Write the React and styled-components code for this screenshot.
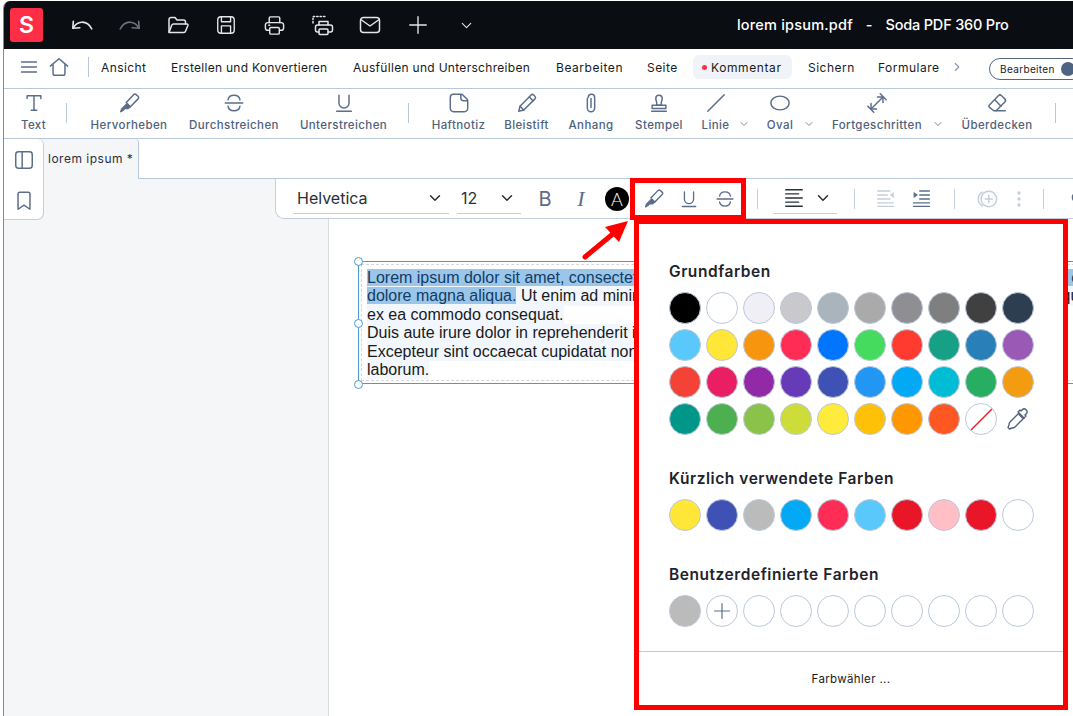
import React from "react";
import styled, { createGlobalStyle } from "styled-components";

const GlobalStyle = createGlobalStyle`
    html, body {
        margin: 0;
        padding: 0;
        background: #fff;
    }

    * {
        box-sizing: border-box;
    }
`;

const Root = styled.div`
    position: relative;
    width: 1073px;
    height: 716px;
    overflow: hidden;
    padding: 1px 0 0 3px;
    background: #fff;
    font-family: Inter, "Noto Sans", sans-serif;
`;

const Frame = styled.div`
    display: flex;
    flex-direction: column;
    height: 715px;
    width: 1100px;
    border-left: 1px solid #8a8a8a;
    border-top-left-radius: 7px;
    overflow: hidden;
`;

const TitleBar = styled.header`
    display: flex;
    align-items: center;
    flex: none;
    height: 48px;
    width: 1070px;
    margin-left: -1px;
    padding-left: 7px;
    background: #0a0d12;
    color: #fff;
`;

const Logo = styled.div`
    display: flex;
    align-items: center;
    justify-content: center;
    flex: none;
    width: 33px;
    height: 34px;
    margin-right: 15px;
    border-radius: 3px;
    background: #ff2d46;
    font-size: 23px;
    font-weight: 600;
`;

const TitleTool = styled.span`
    display: flex;
    justify-content: center;
    flex: none;
    width: 48px;
    color: ${p => (p.$off ? "#6d7177" : "#e4e6ea")};
`;

const DocTitle = styled.div`
    display: flex;
    gap: 13px;
    margin: -1px 0 0 247px;
    font-size: 14.5px;
    font-weight: 500;
    white-space: nowrap;
`;

const TitlePart = styled.span`
    letter-spacing: ${p => p.$track}px;
`;

const MenuBar = styled.nav`
    display: flex;
    align-items: center;
    flex: none;
    height: 40px;
    padding: 0 0 3px 14.5px;
    border-bottom: 1px solid #b9c7da;
    background: #fff;
`;

const MenuIcons = styled.div`
    display: flex;
    align-items: center;
    gap: 9.5px;
    height: 20px;
    padding-right: 18px;
    margin-right: 12px;
    border-right: 1px solid #b9c7da;
    color: #5a6d8a;
`;

const MenuItem = styled.span`
    flex: none;
    width: ${p => p.$w}px;
    margin-right: 25px;
    font-size: 12px;
    font-weight: 400;
    letter-spacing: ${p => p.$track ?? 0.2}px;
    color: #161b23;
    white-space: nowrap;
`;

const ActiveMenuItem = styled(MenuItem)`
    display: flex;
    align-items: center;
    gap: 4px;
    height: 24px;
    margin: 0 16px 0 -8px;
    padding-left: 9px;
    border-radius: 6px;
    background: #f0f3f7;

    &::before {
        content: "";
        flex: none;
        width: 5px;
        height: 5px;
        border-radius: 50%;
        background: #ff2d46;
    }
`;

const MenuMore = styled.span`
    display: flex;
    margin: 0 25px 0 -15px;
    color: #8a97aa;
`;

const ModeToggle = styled.div`
    display: flex;
    align-items: center;
    flex: none;
    gap: 6px;
    width: 94px;
    height: 22px;
    margin-top: 3px;
    padding-left: 10px;
    border: 1px solid #55677f;
    border-radius: 11px;
    font-size: 10px;
    font-weight: 400;
    letter-spacing: 0.35px;
    color: #161b23;

    &::after {
        content: "";
        flex: none;
        width: 14px;
        height: 14px;
        border-radius: 50%;
        background: #4f6484;
    }
`;

const Ribbon = styled.div`
    display: flex;
    align-items: stretch;
    flex: none;
    height: 50px;
    padding: 3px 0 0 17px;
    border-bottom: 1px solid #b9c7da;
    background: #fff;
`;

const RibbonTool = styled.div`
    display: flex;
    flex-direction: column;
    align-items: center;
    flex: none;
    width: ${p => p.$w}px;
    margin-right: ${p => p.$gap ?? 20}px;
    color: #5a6d8a;
`;

const RibbonLabel = styled.span`
    display: flex;
    align-items: center;
    height: 18px;
    margin-top: 2px;
    font-size: 11.5px;
    font-weight: 500;
    letter-spacing: 0.4px;
    color: #4f617c;
    white-space: nowrap;
`;

const RibbonCaret = styled.span`
    display: flex;
    align-items: flex-end;
    align-self: flex-end;
    flex: none;
    width: 12px;
    height: 30px;
    margin: 0 ${p => p.$after}px 0 ${p => p.$before}px;
    padding-bottom: 8px;
    color: #5a6d8a;
`;

const RibbonRule = styled.span`
    flex: none;
    align-self: center;
    width: 1px;
    height: 20px;
    margin: 0 ${p => p.$after}px 4px ${p => p.$before}px;
    background: #b9c7da;
`;

const Workspace = styled.div`
    display: flex;
    flex: 1;
    min-height: 0;
    background: #f5f6f8;
`;

const SideColumn = styled.aside`
    flex: none;
    width: 40px;
`;

const SidePanel = styled.div`
    display: flex;
    flex-direction: column;
    align-items: center;
    gap: 19px;
    height: 81px;
    padding-top: 10px;
    border-right: 1px solid #c3cfdf;
    border-bottom: 1px solid #c3cfdf;
    border-radius: 0 6px 7px 0;
    background: #fff;
    color: #5a6d8a;
`;

const MainColumn = styled.main`
    display: flex;
    flex-direction: column;
    flex: 1;
    min-width: 0;
`;

const TabStrip = styled.div`
    display: flex;
    flex: none;
    height: 40px;
    background: #fff;
`;

const Tab = styled.div`
    flex: none;
    width: 95px;
    padding: 12px 0 0 4px;
    border-right: 1px solid #b9c7da;
    border-top-right-radius: 4px;
    background: #f5f6f8;
    font-size: 12px;
    color: #2a3038;
    letter-spacing: 0.5px;
    white-space: nowrap;
`;

const TabRest = styled.div`
    flex: 1;
    border-bottom: 1px solid #b9c7da;
`;

const FormatBar = styled.div`
    display: flex;
    align-items: center;
    flex: none;
    height: 40px;
    margin-left: 231px;
    padding-left: 17px;
    border-left: 1px solid #c3cfdf;
    border-bottom: 1px solid #c3cfdf;
    border-bottom-left-radius: 9px;
    background: #fff;
    color: #5a6d8a;
`;

const FormatSelect = styled.div`
    display: flex;
    align-items: center;
    justify-content: space-between;
    align-self: flex-start;
    flex: none;
    width: ${p => p.$w}px;
    height: 35px;
    margin-right: ${p => p.$gap}px;
    padding: 3px 5px 0 ${p => p.$pad ?? 4}px;
    border-bottom: 1px solid #c3cfdf;
    font-size: 16px;
    color: #2a3038;
`;

const FormatButton = styled.span`
    display: flex;
    align-items: center;
    justify-content: center;
    flex: none;
    width: ${p => p.$w ?? 36}px;
    color: ${p => (p.$off ? "#c6ceda" : "#5a6d8a")};
`;

const FormatRule = styled.span`
    flex: none;
    width: 1px;
    height: 20px;
    margin: 0 ${p => p.$after}px 0 ${p => p.$before}px;
    background: #c3cfdf;
`;

const BoldMark = styled.span`
    font-size: 20px;
    font-weight: 400;
    color: #5a6d8a;
`;

const ItalicMark = styled.span`
    font-family: "Liberation Serif", serif;
    font-size: 22px;
    font-style: italic;
    color: #5a6d8a;
`;

const ColorBadge = styled.span`
    display: flex;
    align-items: center;
    justify-content: center;
    width: 24px;
    height: 24px;
    border-radius: 50%;
    background: #000;
    color: #fff;
    font-family: Lato, Inter, sans-serif;
    font-size: 18px;
    font-weight: 300;
`;

const Canvas = styled.div`
    flex: 1;
    margin-left: 284px;
    padding: 42px 0 0 29px;
    border-left: 1px solid #dcdcdc;
    background: #fff;
`;

const TextFrame = styled.div`
    position: relative;
    width: 900px;
    height: 123px;
    padding: 2px;
    border: 1px solid #4a98d4;
`;

const TextInner = styled.div`
    height: 100%;
    padding: 4px 0 0 5px;
    border: 1px dashed #d6d6d6;
    font-family: "Liberation Sans", Arial, sans-serif;
    font-size: 16px;
    line-height: 18.4px;
    color: #1a1a1a;
`;

const TextLine = styled.span`
    display: block;
    width: fit-content;
    background: #f1f7fd;
    white-space: nowrap;
`;

const Selected = styled.span`
    background: #9cc6e9;
    color: #103c66;
`;

const Handle = styled.span`
    position: absolute;
    left: -5px;
    top: ${p => p.$top}px;
    width: 9px;
    height: 9px;
    border: 1px solid #4a98d4;
    border-radius: 50%;
    background: #fff;
`;

const RedBox = styled.div`
    position: absolute;
    left: 630px;
    top: 178px;
    width: 116px;
    height: 42px;
    border: 5px solid #f00;
`;

const Arrow = styled.svg`
    position: absolute;
    left: 578px;
    top: 218px;
`;

const ColorPopover = styled.section`
    position: absolute;
    left: 634px;
    top: 219px;
    display: flex;
    flex-direction: column;
    width: 434px;
    height: 491px;
    border: 5px solid #f00;
    background: #fff;
`;

const PopoverBody = styled.div`
    flex: 1;
    padding: 37px 0 0 30px;
`;

const Heading = styled.h3`
    margin: ${p => p.$top || 0}px 0 10px;
    font-size: 15.5px;
    line-height: 21px;
    font-weight: 600;
    letter-spacing: 0.55px;
    color: #1d232c;
`;

const SwatchGrid = styled.div`
    display: grid;
    grid-template-columns: repeat(10, 32px);
    grid-auto-rows: 32px;
    gap: 5px;
`;

const Swatch = styled.span`
    display: flex;
    align-items: center;
    justify-content: center;
    border: 1px solid #bcc9dc;
    border-radius: 50%;
    background: ${p => p.$color || "#fff"};
    color: #5a6d8a;
    overflow: hidden;
`;

const PlainSwatch = styled.span`
    display: flex;
    align-items: center;
    justify-content: center;
    color: #4f617c;
`;

const Slash = styled.svg`
    display: block;
    width: 30px;
    height: 30px;
`;

const PopoverFooter = styled.div`
    display: flex;
    align-items: center;
    justify-content: center;
    flex: none;
    height: 54px;
    border-top: 1px solid #bcc7d8;
    font-size: 11.5px;
    font-weight: 400;
    color: #161b23;
    letter-spacing: 0.35px;
`;

const Svg = styled.svg`
    display: block;
    flex: none;
    fill: none;
    stroke: currentColor;
    stroke-width: ${p => p.$stroke || 1.6};
    stroke-linecap: round;
    stroke-linejoin: round;
`;

const iconPaths = {
    undo: <><path d="M4 8.5 3.5 15 10 14.5"/><path d="M3.8 14.8C7 8.5 16 6.5 21 15.5"/></>,
    redo: <><path d="M20 8.5l.5 6.5-6.5-.5"/><path d="M20.2 14.8C17 8.5 8 6.5 3 15.5"/></>,
    folder: <><path d="M3 19V6.5A2 2 0 0 1 5 4.5h4l2 2.5h6.5a2 2 0 0 1 2 2V11"/><path d="M3 19.5h15a1.5 1.5 0 0 0 1.4-1l2.6-6.2a1 1 0 0 0-1-1.3H7.5a2 2 0 0 0-1.8 1.2L3 19.5Z"/></>,
    save: <><rect x="3" y="3" width="18" height="18" rx="3.5"/><path d="M7 3v5.5h10V3"/><path d="M7 21v-8h10v8"/></>,
    printer: <><path d="M6.5 9V4.2A1.2 1.2 0 0 1 7.7 3h8.6a1.2 1.2 0 0 1 1.2 1.2V9"/><path d="M6.5 17H5a2.5 2.5 0 0 1-2.5-2.5v-3A2.5 2.5 0 0 1 5 9h14a2.5 2.5 0 0 1 2.5 2.5v3A2.5 2.5 0 0 1 19 17h-1.5"/><rect x="7" y="14" width="10" height="7" rx="1.2"/><path d="M6 11.8h1"/></>,
    batchPrint: <><path d="M3 10V3.5h13" strokeDasharray="1.4 2"/><path d="M9 12V8.5h9V12"/><path d="M9 19H7.5A2 2 0 0 1 5.5 17v-3a2 2 0 0 1 2-2h13a2 2 0 0 1 2 2v3a2 2 0 0 1-2 2H18"/><rect x="9" y="16" width="9" height="5.5" rx="1"/></>,
    mail: <><rect x="2.5" y="4.5" width="19" height="15" rx="3"/><path d="m3.5 7 8.5 6 8.5-6"/></>,
    plus: <path d="M12 3v18M3 12h18"/>,
    chevron: <path d="m6 9 6 6 6-6"/>,
    caretRight: <path d="m9 6 6 6-6 6"/>,
    menu: <path d="M3 6h18M3 12h18M3 18h18"/>,
    home: <path d="M2.5 11 12 3l9.5 8M5.5 9v10a2 2 0 0 0 2 2h9a2 2 0 0 0 2-2V9"/>,
    text: <><path d="M4.5 7V4h15v3"/><path d="M12 4v16"/><path d="M9 20h6"/></>,
    highlight: <><path d="M9 11.5 17 3a2 2 0 0 1 2.8-.1l2 1.8a2 2 0 0 1 .1 2.8L13.5 16"/><path d="M10 12.5 13.5 16 11 18H7.5L5.5 20 3 21.5 4 18.5 6.5 16Z" fill="currentColor"/></>,
    strike: <><path d="M5.5 8.5C6 5 9 3.5 12 3.5S18 5 18.5 8.5"/><path d="M2.5 12h19"/><path d="M5.5 15.5C6 19 9 20.5 12 20.5S18 19 18.5 15.5"/></>,
    underline: <><path d="M6.5 3.5V12a5.5 5.5 0 0 0 11 0V3.5"/><path d="M4 21h16"/></>,
    note: <path d="M6 2.5h8.5a2 2 0 0 1 1.4.6L20.9 8a2 2 0 0 1 .6 1.4V18a3.5 3.5 0 0 1-3.5 3.5H6A3.5 3.5 0 0 1 2.5 18V6A3.5 3.5 0 0 1 6 2.5ZM14 3v3.5a3 3 0 0 0 3 3h4"/>,
    pencil: <><path d="M3 21l1.4-5.5L16.5 3.3a2 2 0 0 1 2.8 0l1.4 1.4a2 2 0 0 1 0 2.8L8.5 19.6 3 21Z"/><path d="m14.5 5.5 4 4"/><path d="m4.4 15.5 4.1 4.1"/></>,
    clip: <path d="M8 7v10.5a4 4 0 0 0 8 0V6a3.5 3.5 0 0 0-7 0M12 7v10"/>,
    stamp: <><path d="M9.5 12c0-2-1-3-1-5a3.5 3.5 0 0 1 7 0c0 2-1 3-1 5v2.5h-5V12Z"/><path d="M4.5 14.5h15V18h-15Z"/><path d="M4 21h16"/></>,
    line: <path d="M3 21 21 3"/>,
    oval: <ellipse cx="12" cy="12" rx="10" ry="7.5"/>,
    advanced: <><path d="M6 18 18 6"/><path d="M12.5 5.5h6v6"/><path d="M5.5 12.5v6h6"/><path d="m15.5 2 6.5 6.5"/><path d="M2 15.5 8.5 22"/></>,
    eraser: <><path d="M3.5 14.5 13.5 4a2.5 2.5 0 0 1 3.5 0l3.5 3.5a2.5 2.5 0 0 1 0 3.5L11 20.5H8.5l-5-4a1.5 1.5 0 0 1 0-2Z"/><path d="m9.5 8.5 7 7"/><path d="M11 20.5h10"/></>,
    sidebar: <><rect x="3" y="3" width="18" height="18" rx="3"/><path d="M10 3v18"/></>,
    bookmark: <path d="M5.5 4.5a2 2 0 0 1 2-2h9a2 2 0 0 1 2 2V21L12 16.5 5.5 21V4.5Z"/>,
    align: <path d="M3 3h18M3 7.5h14M3 12h18M3 16.5h14M3 21h18"/>,
    outdent: <><path d="M3 3.5h14M3 8h11M3 12.5h14M3 17h18M3 21h18"/><path d="M21.5 4.5v7L17 8Z" fill="currentColor" stroke="none"/></>,
    indent: <><path d="M10 3.5h11M10 8h11M10 12.5h11M3 17h18M3 21h18"/><path d="M3 4.5v7L8 8Z" fill="currentColor" stroke="none"/></>,
    circlePlus: <><circle cx="14" cy="12" r="8.5"/><path d="M7 4.5a8.5 8.5 0 0 0 0 15"/><path d="M14 8v8M10 12h8"/></>,
    dots: <><circle cx="12" cy="4" r="2.2" fill="currentColor" stroke="none"/><circle cx="12" cy="12" r="2.2" fill="currentColor" stroke="none"/><circle cx="12" cy="20" r="2.2" fill="currentColor" stroke="none"/></>,
    dropper: <><path d="m13 7.5 3.5 3.5"/><path d="m15 4 1.5-1.5a2.3 2.3 0 0 1 3.3 0l.7.7a2.3 2.3 0 0 1 0 3.3L19 8l1 1-2 2-6-6 2-2Z"/><path d="M13 6 4 15c-1 1-1 2-1 3l-1 2.5 1.5 1.5L6 21c1 0 2 0 3-1l9-9"/></>,
    link: <><path d="M10 4a6 6 0 0 0 0 12h4"/><path d="M14 8a6 6 0 0 1 0 12h-4"/></>,
};

const Icon = ({ name, size = 22, stroke }) => (
    <Svg viewBox="0 0 24 24" width={size} height={size} $stroke={stroke}>
        {iconPaths[name]}
    </Svg>
);

const titleTools = [
    { name: "undo", w: 26 },
    { name: "redo", off: true, w: 26 },
    { name: "folder", w: 24 },
    { name: "save", w: 22 },
    { name: "printer", w: 23 },
    { name: "batchPrint", w: 24 },
    { name: "mail", w: 24 },
    { name: "plus", w: 22 },
    { name: "chevron", w: 17 },
];

const menuItems = [
    { label: "Ansicht", w: 45, track: 0.4 },
    { label: "Erstellen und Konvertieren", w: 157, track: 0.28 },
    { label: "Ausfüllen und Unterschreiben", w: 178, track: 0.3 },
    { label: "Bearbeiten", w: 66, track: 0.55 },
    { label: "Seite", w: 29, track: 0.45 },
];

const basicColors = [
    "#000000", "#ffffff", "#efeff5", "#c8c8cd", "#aab4bc", "#aaaaaa", "#8e8e93", "#7f7f7f", "#404040", "#2c3e50",
    "#5ac8fa", "#ffe637", "#f7950f", "#ff2d55", "#0076ff", "#44db5e", "#ff3b30", "#16a085", "#2980b9", "#9b59b6",
    "#f44336", "#e91e63", "#9229a6", "#673ab7", "#3f51b5", "#2196f3", "#03a9f4", "#00bcd4", "#27ae60", "#f39c12",
    "#009688", "#4caf50", "#8bc34a", "#cddc39", "#ffeb3b", "#ffc107", "#ff9800", "#ff5722",
];

const recentColors = ["#ffe637", "#3f51b5", "#bbbbbb", "#03a9f4", "#ff2d55", "#5ac8fa", "#e81626", "#ffbfc4", "#e81626", "#ffffff"];

export default function App() {
    return (
        <Root>
            <GlobalStyle/>
            <Frame>
                <TitleBar>
                    <Logo>S</Logo>
                    {titleTools.map(t => (
                        <TitleTool key={t.name} $off={t.off}>
                            <Icon name={t.name} size={t.w} stroke={1.5}/>
                        </TitleTool>
                    ))}
                    <DocTitle>
                        <TitlePart $track={0.2}>lorem ipsum.pdf</TitlePart>
                        <TitlePart $track={0}>-</TitlePart>
                        <TitlePart $track={-0.2}>Soda PDF 360 Pro</TitlePart>
                    </DocTitle>
                </TitleBar>

                <MenuBar>
                    <MenuIcons>
                        <Icon name="menu" size={20}/>
                        <Icon name="home" size={22}/>
                    </MenuIcons>
                    {menuItems.map(m => <MenuItem key={m.label} $w={m.w} $track={m.track}>{m.label}</MenuItem>)}
                    <ActiveMenuItem $w={99} $track={0.6}>Kommentar</ActiveMenuItem>
                    <MenuItem $w={45} $track={0.5}>Sichern</MenuItem>
                    <MenuItem $w={62} $track={0.5}>Formulare</MenuItem>
                    <MenuMore><Icon name="caretRight" size={14} stroke={2}/></MenuMore>
                    <ModeToggle>Bearbeiten</ModeToggle>
                </MenuBar>

                <Ribbon>
                    <RibbonTool $w={25} $gap={0}><Icon name="text"/><RibbonLabel>Text</RibbonLabel></RibbonTool>
                    <RibbonRule $before={20} $after={23}/>
                    <RibbonTool $w={78}><Icon name="highlight"/><RibbonLabel>Hervorheben</RibbonLabel></RibbonTool>
                    <RibbonTool $w={92}><Icon name="strike"/><RibbonLabel>Durchstreichen</RibbonLabel></RibbonTool>
                    <RibbonTool $w={87} $gap={0}><Icon name="underline"/><RibbonLabel>Unterstreichen</RibbonLabel></RibbonTool>
                    <RibbonRule $before={21} $after={23}/>
                    <RibbonTool $w={53}><Icon name="note"/><RibbonLabel>Haftnotiz</RibbonLabel></RibbonTool>
                    <RibbonTool $w={43} $gap={19}><Icon name="pencil"/><RibbonLabel>Bleistift</RibbonLabel></RibbonTool>
                    <RibbonTool $w={48}><Icon name="clip"/><RibbonLabel>Anhang</RibbonLabel></RibbonTool>
                    <RibbonTool $w={48} $gap={19}><Icon name="stamp"/><RibbonLabel>Stempel</RibbonLabel></RibbonTool>
                    <RibbonTool $w={27} $gap={0}><Icon name="line"/><RibbonLabel>Linie</RibbonLabel></RibbonTool>
                    <RibbonCaret $before={9} $after={16}><Icon name="chevron" size={12}/></RibbonCaret>
                    <RibbonTool $w={28} $gap={0}><Icon name="oval"/><RibbonLabel>Oval</RibbonLabel></RibbonTool>
                    <RibbonCaret $before={9} $after={16}><Icon name="chevron" size={12}/></RibbonCaret>
                    <RibbonTool $w={92} $gap={0}><Icon name="advanced"/><RibbonLabel>Fortgeschritten</RibbonLabel></RibbonTool>
                    <RibbonCaret $before={9} $after={17}><Icon name="chevron" size={12}/></RibbonCaret>
                    <RibbonTool $w={72} $gap={0}><Icon name="eraser"/><RibbonLabel>Überdecken</RibbonLabel></RibbonTool>
                    <RibbonRule $before={22} $after={0}/>
                </Ribbon>

                <Workspace>
                    <SideColumn>
                        <SidePanel>
                            <Icon name="sidebar"/>
                            <Icon name="bookmark"/>
                        </SidePanel>
                    </SideColumn>
                    <MainColumn>
                        <TabStrip>
                            <Tab>lorem ipsum *</Tab>
                            <TabRest/>
                        </TabStrip>
                        <FormatBar>
                            <FormatSelect $w={156} $gap={8}>Helvetica<Icon name="chevron" size={18} stroke={2}/></FormatSelect>
                            <FormatSelect $w={64} $gap={6}>12<Icon name="chevron" size={18} stroke={2}/></FormatSelect>
                            <FormatButton><BoldMark>B</BoldMark></FormatButton>
                            <FormatButton><ItalicMark>I</ItalicMark></FormatButton>
                            <FormatButton><ColorBadge>A</ColorBadge></FormatButton>
                            <FormatButton><Icon name="highlight" size={21}/></FormatButton>
                            <FormatButton><Icon name="underline" size={20}/></FormatButton>
                            <FormatButton><Icon name="strike" size={20}/></FormatButton>
                            <FormatRule $before={14} $after={15}/>
                            <FormatSelect $w={64} $gap={0} $pad={10}>
                                <Icon name="align" size={22}/>
                                <Icon name="chevron" size={18} stroke={2}/>
                            </FormatSelect>
                            <FormatRule $before={17} $after={12}/>
                            <FormatButton $off><Icon name="outdent" size={21}/></FormatButton>
                            <FormatButton><Icon name="indent" size={21}/></FormatButton>
                            <FormatRule $before={15} $after={14}/>
                            <FormatButton $off><Icon name="circlePlus" size={22}/></FormatButton>
                            <FormatButton $off $w={28}><Icon name="dots" size={18}/></FormatButton>
                            <FormatRule $before={10} $after={17}/>
                            <FormatButton><Icon name="link" size={20}/></FormatButton>
                        </FormatBar>
                        <Canvas>
                            <TextFrame>
                                <Handle $top={-5}/>
                                <Handle $top={57}/>
                                <Handle $top={118}/>
                                <TextInner>
                                    <TextLine><Selected>Lorem ipsum dolor sit amet, consectetur adipiscing elit, sed do eiusmod tempor incididunt ut labore et</Selected></TextLine>
                                    <TextLine><Selected>dolore magna aliqua.</Selected> Ut enim ad minim veniam, quis nostrud exercitation ullamco laboris nisi ut aliquip</TextLine>
                                    <TextLine>ex ea commodo consequat.</TextLine>
                                    <TextLine>Duis aute irure dolor in reprehenderit in voluptate velit esse cillum dolore eu fugiat nulla pariatur.</TextLine>
                                    <TextLine>Excepteur sint occaecat cupidatat non proident, sunt in culpa qui officia deserunt mollit anim id est</TextLine>
                                    <TextLine>laborum.</TextLine>
                                </TextInner>
                            </TextFrame>
                        </Canvas>
                    </MainColumn>
                </Workspace>
            </Frame>

            <RedBox/>
            <Arrow width="60" height="50" viewBox="0 0 60 50">
                <path d="M7 39 36 15" stroke="#f00" strokeWidth="5" strokeLinecap="round"/>
                <path d="M50 3 41 24 27 9Z" fill="#f00"/>
            </Arrow>

            <ColorPopover>
                <PopoverBody>
                    <Heading>Grundfarben</Heading>
                    <SwatchGrid>
                        {basicColors.map((c, i) => <Swatch key={i} $color={c}/>)}
                        <Swatch>
                            <Slash viewBox="0 0 30 30">
                                <path d="M4 27 27 4" stroke="#ee1c25" strokeWidth="1.5"/>
                            </Slash>
                        </Swatch>
                        <PlainSwatch><Icon name="dropper" size={24} stroke={1.4}/></PlainSwatch>
                    </SwatchGrid>
                    <Heading $top={33}>Kürzlich verwendete Farben</Heading>
                    <SwatchGrid>
                        {recentColors.map((c, i) => <Swatch key={i} $color={c}/>)}
                    </SwatchGrid>
                    <Heading $top={33}>Benutzerdefinierte Farben</Heading>
                    <SwatchGrid>
                        <Swatch $color="#bbbbbb"/>
                        <Swatch><Icon name="plus" size={20} stroke={1.4}/></Swatch>
                        {Array.from({ length: 8 }, (_, i) => <Swatch key={i}/>)}
                    </SwatchGrid>
                </PopoverBody>
                <PopoverFooter>Farbwähler ...</PopoverFooter>
            </ColorPopover>
        </Root>
    );
}
